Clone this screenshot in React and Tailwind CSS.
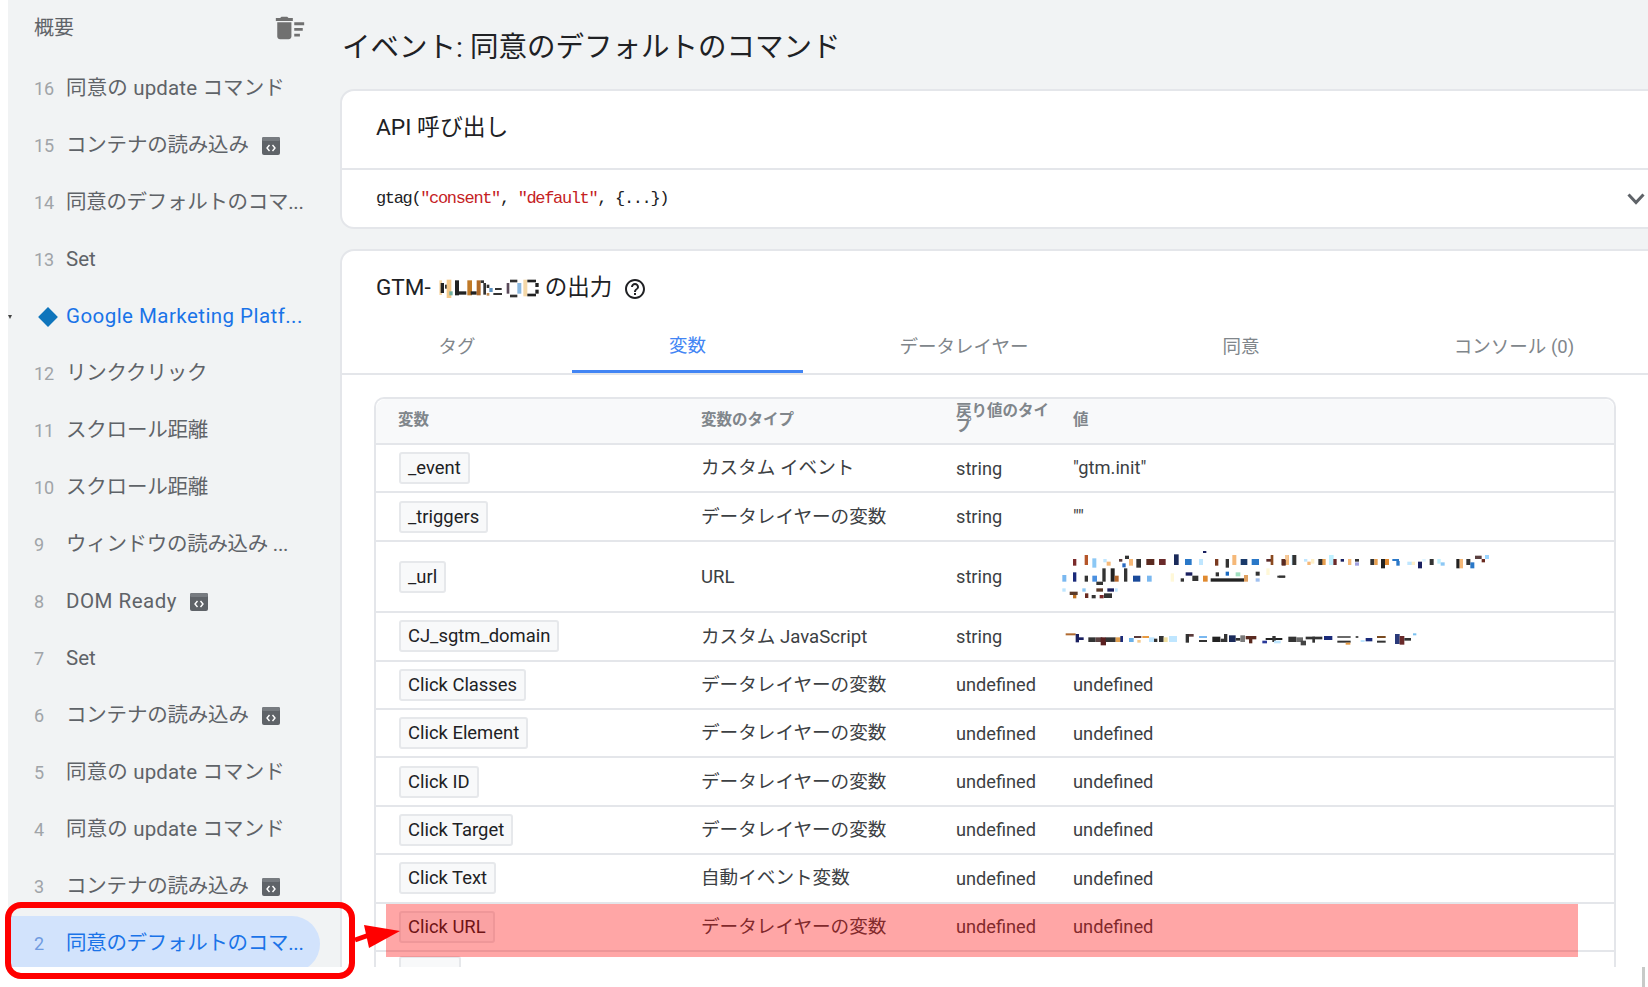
const sidebarItems = [
  { num: '16', label: '同意の update コマンド', fit: 'tracking-[0.15px]' },
  { num: '15', label: 'コンテナの読み込み', code: true, fit: 'tracking-[-0.2px]' },
  { num: '14', label: '同意のデフォルトのコマ...', fit: 'tracking-[-0.3px]' },
  { num: '13', label: 'Set', fit: 'tracking-[0px]' },
  { diamond: true, label: 'Google Marketing Platf...', fit: 'tracking-[0.45px]' },
  { num: '12', label: 'リンククリック', fit: 'tracking-[-0.2px]' },
  { num: '11', label: 'スクロール距離', fit: 'tracking-[-0.2px]' },
  { num: '10', label: 'スクロール距離', fit: 'tracking-[-0.2px]' },
  { num: '9', label: 'ウィンドウの読み込み ...', fit: 'tracking-[-0.3px]' },
  { num: '8', label: 'DOM Ready', code: true, fit: 'tracking-[0.5px]' },
  { num: '7', label: 'Set', fit: 'tracking-[0px]' },
  { num: '6', label: 'コンテナの読み込み', code: true, fit: 'tracking-[-0.2px]' },
  { num: '5', label: '同意の update コマンド', fit: 'tracking-[0.15px]' },
  { num: '4', label: '同意の update コマンド', fit: 'tracking-[0.15px]' },
  { num: '3', label: 'コンテナの読み込み', code: true, fit: 'tracking-[-0.2px]' },
  { num: '2', label: '同意のデフォルトのコマ...', active: true, fit: 'tracking-[-0.3px]' },
];

const rows = [
  { name: '_event', type: 'カスタム イベント', ret: 'string', value: '"gtm.init"' },
  { name: '_triggers', type: 'データレイヤーの変数', ret: 'string', value: '""' },
  { name: '_url', type: 'URL', ret: 'string', mosaic: 'url', tall: true },
  { name: 'CJ_sgtm_domain', type: 'カスタム JavaScript', ret: 'string', mosaic: 'domain' },
  { name: 'Click Classes', type: 'データレイヤーの変数', ret: 'undefined', value: 'undefined' },
  { name: 'Click Element', type: 'データレイヤーの変数', ret: 'undefined', value: 'undefined' },
  { name: 'Click ID', type: 'データレイヤーの変数', ret: 'undefined', value: 'undefined' },
  { name: 'Click Target', type: 'データレイヤーの変数', ret: 'undefined', value: 'undefined' },
  { name: 'Click Text', type: '自動イベント変数', ret: 'undefined', value: 'undefined' },
  { name: 'Click URL', type: 'データレイヤーの変数', ret: 'undefined', value: 'undefined' },
  // only the top of this chip is visible, the page is cut off below it
  { name: '', type: '', ret: '', value: '', chipW: 'w-[62px]' },
];

const tabs = [
  { label: 'タグ', w: 'w-[230px]' },
  { label: '変数', w: 'w-[231px]', active: true },
  { label: 'データレイヤー', w: 'w-[322px]' },
  { label: '同意', w: 'w-[232px]' },
  { label: 'コンソール (0)', w: 'w-[314px]' },
];

// redacted values in the screenshot: [x, y, w, h, colour] in 3x pixels
const urlBlocks = [
  [42,42,10,20,'#7a2a2a'],[77,30,10,30,'#b5562a'],[100,40,12,28,'#8cc8f5'],[133,42,10,10,'#bfe6ff'],[143,50,12,12,'#f5b878'],[180,42,10,8,'#5a3a3a'],[198,32,12,10,'#333'],[190,55,10,12,'#2a6ac0'],[210,42,12,20,'#f5b878'],[232,42,14,26,'#333'],[262,42,24,18,'#5a2a20'],[300,42,20,18,'#6a2a2a'],[345,28,14,32,'#1a2a5a'],[378,42,20,18,'#2a78c8'],[420,42,12,18,'#bfe6ff'],[432,18,10,6,'#1a2060'],[468,42,10,20,'#7a3a20'],[500,42,10,26,'#333'],[520,30,12,30,'#f5b878'],[545,42,20,18,'#1a3a6a'],[578,42,22,18,'#2a78c8'],[622,42,20,8,'#5a2a2a'],[635,30,8,30,'#8a4a20'],[668,42,12,18,'#333'],[680,30,10,30,'#f5b878'],[698,30,10,30,'#bfe6ff'],
  [10,90,12,20,'#7ab8f0'],[42,82,10,28,'#1a2a7a'],[77,92,10,18,'#333'],[100,92,14,18,'#4a90e0'],[112,110,20,10,'#333'],[130,70,10,40,'#333'],[155,70,12,40,'#222'],[167,92,12,18,'#b5662a'],[195,70,10,40,'#333'],[222,92,22,18,'#1a4a9a'],[264,92,14,18,'#7ab8f0'],[335,85,10,25,'#fff8d8'],[365,100,10,10,'#333'],[380,82,20,10,'#1a2060'],[400,92,18,16,'#333'],[432,92,14,18,'#e08a30'],[455,100,100,10,'#222'],[470,82,10,12,'#333'],[500,80,10,12,'#1a6ac0'],[530,82,14,12,'#a0e0c0'],[555,90,12,20,'#e0a060'],[590,80,12,12,'#333'],[590,100,12,10,'#a0c0f0'],[622,70,10,20,'#fff8d8'],[655,92,24,6,'#333'],
  [10,130,10,10,'#bfe6ff'],[32,140,24,10,'#5a3a2a'],[42,150,10,10,'#c07020'],[70,130,10,10,'#8cc8f5'],[78,145,10,14,'#6a2a20'],[98,150,12,10,'#333'],[112,130,20,10,'#5a3a2a'],[122,150,12,10,'#7a2a2a'],[145,130,20,10,'#1a2060'],[135,145,24,14,'#333'],[168,130,8,10,'#bfe6ff'],
  [668,42,12,20,'#5a2a20'],[678,30,10,14,'#f5c898'],[700,30,12,30,'#333'],[735,42,10,8,'#bfe6ff'],[745,50,10,10,'#f5b878'],[756,42,10,14,'#fff0c8'],[778,42,14,18,'#333'],[790,42,10,18,'#e8a050'],[810,30,14,30,'#bff0ff'],[823,42,10,18,'#6a2a2a'],[845,42,10,8,'#1a2060'],[867,42,10,18,'#f5b878'],[888,42,12,8,'#333'],[888,52,12,10,'#a0a0e0'],[934,42,12,18,'#333'],[946,42,10,18,'#e8a050'],[966,42,12,28,'#222'],[978,42,12,18,'#e08a30'],[1000,42,20,6,'#2a78c8'],[1012,48,10,14,'#2a78c8'],[1045,50,14,10,'#bfe6ff'],[1058,50,10,10,'#fff0c8'],[1077,50,12,20,'#1a2060'],[1090,42,10,8,'#dff4ff'],[1112,42,12,18,'#333'],[1135,42,10,14,'#bff0ff'],[1145,52,12,10,'#8cc8f5'],[1192,42,10,28,'#222'],[1202,42,10,28,'#f5b878'],[1222,42,12,18,'#333'],[1234,52,12,18,'#2a78c8'],[1248,32,20,10,'#5a4040'],[1268,42,10,10,'#6a2a20'],[1278,30,12,12,'#9ad4ff'],[660,92,18,6,'#333'],
];

const domainBlocks = [
  [20,28,30,6,'#b06a30'],[50,30,10,25,'#1a2060'],[60,40,14,8,'#1a2060'],[88,40,22,14,'#333'],[110,40,20,14,'#5a4040'],[125,40,16,24,'#5a2020'],[140,40,30,14,'#333'],[170,40,22,14,'#e0a050'],[184,36,8,18,'#1a2a7a'],[210,42,14,12,'#6ab0e8'],[225,36,22,6,'#5a3a3a'],[235,48,10,8,'#f5c888'],[250,36,20,6,'#e89a40'],[270,40,16,14,'#bfe6ff'],[285,44,10,10,'#333'],[300,36,14,18,'#333'],[314,40,12,14,'#f0e0a0'],[330,36,24,18,'#bfe6ff'],[380,30,10,26,'#333'],[390,30,14,8,'#5a3a3a'],[420,36,24,6,'#7ab8f0'],[420,48,24,6,'#333'],[460,38,24,16,'#222'],[485,44,14,10,'#333'],[495,30,10,24,'#333'],
  [510,34,20,20,'#1a2a5a'],[530,42,14,8,'#333'],[544,34,14,20,'#7a7a7a'],[560,36,32,10,'#5a2a20'],[570,44,10,14,'#5a2a20'],[610,50,14,8,'#2a3a9a'],[620,42,50,6,'#222'],[640,36,10,18,'#333'],[645,50,20,8,'#bfe6ff'],[688,38,24,16,'#333'],[712,40,20,14,'#6a6a6a'],[725,50,16,14,'#444'],[740,38,50,8,'#333'],[760,38,8,18,'#333'],[795,36,25,12,'#1a2a7a'],[835,36,40,6,'#6a6a6a'],[835,50,40,6,'#333'],[860,56,14,6,'#e89a40'],[890,36,8,6,'#555'],[905,48,12,6,'#bfe6ff'],[920,42,20,10,'#1a2a7a'],[954,36,26,6,'#7a4a20'],[954,50,26,6,'#333'],[1008,30,14,30,'#2a3a7a'],[1022,36,14,26,'#6a2a2a'],[1036,42,20,8,'#333'],[1062,28,10,6,'#7ac0f0'],
];

const gtmBlocks = [
  [28,22,8,44,'#f8d8a8'],[32,30,10,30,'#222'],[45,35,12,12,'#333'],[50,20,14,55,'#f5c888'],[58,55,10,12,'#70b0a0'],[75,22,12,45,'#222'],[87,55,22,10,'#222'],[112,22,14,45,'#c07a28'],[122,55,18,10,'#222'],[140,22,12,45,'#b06a28'],[152,22,10,8,'#333'],[160,30,8,35,'#333'],[170,35,8,10,'#333'],[178,45,10,12,'#5a90c0'],[190,60,26,6,'#333'],[195,45,20,6,'#333'],[170,60,8,8,'#c08a50'],[230,30,8,32,'#5a4a5a'],[240,20,22,8,'#333'],[240,65,22,8,'#333'],[262,30,12,32,'#8ab8e0'],[280,20,12,50,'#f5d8a8'],[292,20,26,8,'#222'],[292,62,26,8,'#222'],[316,30,10,12,'#222'],[316,50,10,12,'#222'],
];

function Mosaic({ blocks, vw, vh, className }) {
  return (
    <svg viewBox={`0 0 ${vw} ${vh}`} className={className}>
      {blocks.map(([x, y, w, h, c], i) => (
        <rect key={i} x={x} y={y} width={w} height={h} fill={c} />
      ))}
    </svg>
  );
}

function CodeBadge() {
  return (
    <svg viewBox="0 0 18 18" className="ml-[13px] h-[18px] w-[18px] shrink-0">
      <rect x="0" y="0" width="18" height="18" rx="2" fill="#5f6368" />
      <rect x="0" y="0" width="18" height="4" rx="1.5" fill="#777b80" />
      <path d="M7.5 8 L5 11 L7.5 14 M10.5 8 L13 11 L10.5 14" fill="none" stroke="#fff" strokeWidth="1.4" />
    </svg>
  );
}

function SidebarRow({ item }) {
  const textColor = item.active || item.diamond ? 'text-[#1a73e8]' : 'text-[#5f6368]';
  return (
    <div
      className={`relative flex h-[56px] mb-px items-center rounded-r-full pl-[26px] ${
        item.active ? 'w-[312px] bg-[#d2e3fc]' : 'w-full'
      }`}
    >
      {item.diamond && (
        <div className="absolute left-0 top-[26px] h-0 w-0 border-x-[2px] border-t-[4px] border-x-transparent border-t-[#444]" />
      )}
      {item.diamond ? (
        <div className="flex w-[32px] shrink-0 items-center">
          <div className="ml-[7px] h-[14px] w-[14px] rotate-45 bg-[#0f75bc]" />
        </div>
      ) : (
        <div className={`w-[32px] shrink-0 text-[18px] ${item.active ? 'text-[#6f9be0]' : 'text-[#a0a4a8]'}`}>
          {item.num}
        </div>
      )}
      <div className={`whitespace-nowrap text-[20.5px] ${item.fit} ${textColor}`}>{item.label}</div>
      {item.code && <CodeBadge />}
    </div>
  );
}

function Sidebar() {
  return (
    <aside className="w-[332px] shrink-0 bg-[#f1f3f4]">
      <div className="flex h-[60.5px] items-start justify-between pl-[26px] pr-[33px] pt-[11px]">
        <span className="mt-[2px] text-[20px] text-[#5f6368]">概要</span>
        <svg viewBox="0 0 24 24" className="h-[34px] w-[34px] fill-[#707070]">
          <path d="M15 16h4v2h-4zm0-8h7v2h-7zm0 4h6v2h-6zM3 18c0 1.1.9 2 2 2h6c1.1 0 2-.9 2-2V8H3v10zM14 5h-3l-1-1H6L5 5H2v2h12z" />
        </svg>
      </div>
      {sidebarItems.map((item, i) => (
        <SidebarRow key={i} item={item} />
      ))}
    </aside>
  );
}

function VariableRow({ row }) {
  return (
    <div
      className={`flex shrink-0 items-center border-b-2 border-[#e4e6ea] pl-[23px] ${
        row.tall ? 'h-[71.5px]' : 'h-[48.4px]'
      }`}
    >
      <div className="w-[302px] shrink-0">
        <span
          className={`inline-block h-[32px] rounded-[3px] border-2 border-[#e6e8eb] bg-[#f8f9fa] px-[7px] text-[18.4px] leading-[28px] text-[#202124] ${
            row.chipW || ''
          }`}
        >
          {row.name}
        </span>
      </div>
      <div className="w-[255px] shrink-0 pt-[2px] text-[18.6px] text-[#3c4043]">{row.type}</div>
      <div className="w-[117px] shrink-0 text-[18.2px] text-[#3c4043]">{row.ret}</div>
      <div className="min-w-0 flex-1 text-[18.3px] text-[#3c4043]">
        {row.mosaic === 'url' && (
          <Mosaic blocks={urlBlocks} vw={1380} vh={180} className="-ml-[14px] -mt-[4px] h-[60px] w-[460px] blur-[0.5px]" />
        )}
        {row.mosaic === 'domain' && (
          <Mosaic blocks={domainBlocks} vw={1110} vh={90} className="-ml-[14px] mt-[6px] h-[30px] w-[370px] blur-[0.5px]" />
        )}
        {!row.mosaic && row.value}
      </div>
    </div>
  );
}

function VariablesTable() {
  return (
    <div className="ml-[32px] mt-[22px] w-[1242px] rounded-t-[10px] border-x-2 border-t-2 border-[#e4e6ea]">
      <div className="flex h-[46px] items-center rounded-t-[10px] border-b-2 border-[#e4e6ea] bg-[#f8f9fa] pl-[22px] text-[15.5px] font-bold text-[#80868b]">
        <div className="w-[303px] shrink-0">変数</div>
        <div className="w-[255px] shrink-0">変数のタイプ</div>
        <div className="w-[104px] shrink-0 pb-[4px] leading-[15px]">戻り値のタイプ</div>
        <div className="ml-[13px]">値</div>
      </div>
      {rows.map((row, i) => (
        <VariableRow key={i} row={row} />
      ))}
    </div>
  );
}

export default function App() {
  return (
    <div
      lang="ja"
      className="relative h-[987px] w-[1648px] overflow-hidden bg-white font-[Roboto,'Noto_Sans_CJK_JP',sans-serif]"
    >
      <div className="ml-2 flex h-[967px] overflow-hidden">
        <Sidebar />
        <main className="min-w-0 flex-1 overflow-hidden bg-[#f1f3f4]">
          <h1 className="h-[89px] pl-[2px] pt-[29px] text-[28.5px] font-normal leading-[38px] text-[#202124]">
            イベント: 同意のデフォルトのコマンド
          </h1>
          <section className="w-[1330px] rounded-[14px] border-2 border-[#e4e6ea] bg-white">
            <div className="flex h-[79px] items-center border-b-2 border-[#e4e6ea] pb-[2px] pl-[34px] text-[22.8px] text-[#202124]">
              API 呼び出し
            </div>
            <div className="flex h-[57px] items-center justify-between pl-[34px] pr-[23px]">
              <code className="mt-px font-['Liberation_Mono',monospace] text-[17px] tracking-[-1.35px] text-[#202124]">
                gtag(<span className="text-[#c5221f]">"consent"</span>, <span className="text-[#c5221f]">"default"</span>, {'{...}'})
              </code>
              <svg viewBox="0 0 18 12" className="h-[12px] w-[18px]">
                <path d="M1.5 1.5 L9 9.5 L16.5 1.5" fill="none" stroke="#5f6368" strokeWidth="3" />
              </svg>
            </div>
          </section>
          <section className="mt-[20px] h-[800px] w-[1330px] rounded-t-[14px] border-2 border-[#e4e6ea] bg-white">
            <div className="flex h-[69px] items-center pl-[34px] pt-[5px] text-[22.5px] text-[#202124]">
              <span>GTM-</span>
              <Mosaic blocks={gtmBlocks} vw={330} vh={90} className="-ml-[1px] mr-[5px] h-[30px] w-[110px] blur-[0.4px]" />
              <span>の出力</span>
              <svg viewBox="0 0 24 24" className="ml-[11px] mt-[2px] h-[24px] w-[24px] fill-[#202124]">
                <path d="M11 18h2v-2h-2v2zm1-16C6.48 2 2 6.48 2 12s4.48 10 10 10 10-4.480 10-10S17.520 2 12 2zm0 18c-4.410 0-8-3.590-8-8s3.590-8 8-8 8 3.590 8 8-3.590 8-8 8zm0-14c-2.210 0-4 1.790-4 4h2c0-1.100.9-2 2-2s2 .9 2 2c0 2-3 1.750-3 5h2c0-2.250 3-2.500 3-5 0-2.210-1.790-4-4-4z" />
              </svg>
            </div>
            <div className="flex h-[55px] border-b-2 border-[#e4e6ea]">
              {tabs.map((tab) => (
                <div
                  key={tab.label}
                  className={`flex shrink-0 items-center justify-center pt-[3px] text-[18.5px] ${tab.w} ${
                    tab.active ? 'border-b-[3px] border-[#4285f4] text-[#4285f4]' : 'text-[#80868b]'
                  }`}
                >
                  {tab.label}
                </div>
              ))}
            </div>
            <VariablesTable />
          </section>
        </main>
      </div>

      {/* annotations drawn on top of the screenshot */}
      <div className="absolute left-[386px] top-[904px] h-[53px] w-[1192px] bg-[#ff0000]/35" />
      <div className="absolute left-[5px] top-[902px] h-[77px] w-[350px] rounded-[16px] border-[6px] border-[#ff0000]" />
      <svg viewBox="0 0 60 40" className="absolute left-[350px] top-[920px] h-[40px] w-[60px]">
        <path d="M5 20 L22 14" stroke="#ff0000" strokeWidth="5" fill="none" />
        <path d="M50 11 L14 5 L19 28 Z" fill="#ff0000" />
      </svg>
      <div className="absolute left-[1642px] top-[967px] h-[20px] w-[3px] bg-[#c8cac8]" />
    </div>
  );
}
